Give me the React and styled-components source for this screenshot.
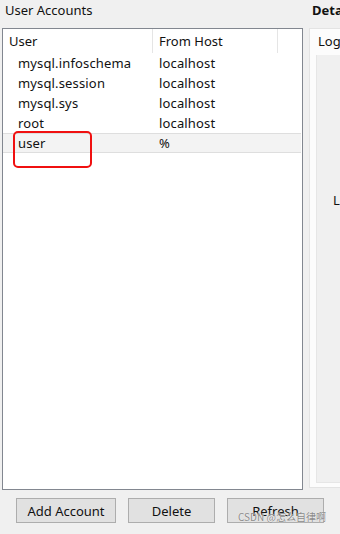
import styled, { createGlobalStyle } from 'styled-components';

const GlobalStyle = createGlobalStyle`
    body {
        margin: 0;
        background: #f0f0f0;
        font-family: "Noto Sans", "Liberation Sans", sans-serif;
        overflow: hidden;
    }
`;

const accounts = [
    { user: 'mysql.infoschema', host: 'localhost' },
    { user: 'mysql.session', host: 'localhost' },
    { user: 'mysql.sys', host: 'localhost' },
    { user: 'root', host: 'localhost' },
    { user: 'user', host: '%', selected: true },
];

function App() {
    return (
        <>
            <GlobalStyle />
            <Window>
                <Section>
                    <SectionTitle>User Accounts</SectionTitle>
                    <ListBox>
                        <HeaderRow>
                            <HeaderCell $width={150}>User</HeaderCell>
                            <HeaderCell $width={125}>From Host</HeaderCell>
                        </HeaderRow>
                        {accounts.map((a) => (
                            <Row key={a.user} $selected={a.selected}>
                                <UserCell>{a.user}</UserCell>
                                <HostCell>{a.host}</HostCell>
                            </Row>
                        ))}
                        <Highlight />
                    </ListBox>
                </Section>
                <Section>
                    <SectionTitle $bold>Details for account user@%</SectionTitle>
                    <DetailsPanel>
                        <TabLabel>Login</TabLabel>
                        <TabPage>
                            <FieldLabel>Limit to Hosts Matching:</FieldLabel>
                        </TabPage>
                    </DetailsPanel>
                </Section>
                <ButtonBar>
                    <Button $width={100}>Add Account</Button>
                    <Button $width={87}>Delete</Button>
                    <Button $width={97}>Refresh</Button>
                    <Watermark>CSDN @怎么自律啊</Watermark>
                </ButtonBar>
            </Window>
        </>
    );
}

export default App;

const Window = styled.div`
    width: 340px;
    height: 534px;
    overflow: hidden;
    display: grid;
    grid-template-columns: 301px 300px;
    grid-template-rows: 490px auto;
    column-gap: 6px;
    padding-left: 2px;
    box-sizing: border-box;
`;

const Section = styled.div`
    display: flex;
    flex-direction: column;
    min-width: 0;
`;

const SectionTitle = styled.div`
    height: 28px;
    padding-left: 3px;
    font-size: 13px;
    line-height: 20px;
    font-weight: ${(p) => (p.$bold ? 700 : 400)};
    color: #111;
    white-space: nowrap;
`;

const ListBox = styled.div`
    position: relative;
    flex: 1;
    background: #fff;
    border: 1px solid #828790;
`;

const HeaderRow = styled.div`
    display: flex;
    height: 24px;
`;

const HeaderCell = styled.div`
    width: ${(p) => p.$width}px;
    padding-left: 6px;
    box-sizing: border-box;
    border-right: 1px solid #e5e5e5;
    font-size: 13px;
    line-height: 24px;
    color: #111;
`;

const Row = styled.div`
    display: flex;
    height: 20px;
    box-sizing: border-box;
    margin-right: 1px;
    background: ${(p) => (p.$selected ? '#f3f3f3' : 'transparent')};
    border-top: 1px solid ${(p) => (p.$selected ? '#dedede' : 'transparent')};
    border-bottom: 1px solid ${(p) => (p.$selected ? '#dedede' : 'transparent')};
`;

const UserCell = styled.div`
    width: 150px;
    padding-left: 15px;
    box-sizing: border-box;
    font-size: 13px;
    line-height: 18px;
    letter-spacing: 0.15px;
    color: #111;
`;

const HostCell = styled(UserCell)`
    padding-left: 6px;
    width: auto;
`;

const Highlight = styled.div`
    position: absolute;
    left: 10px;
    top: 102px;
    width: 79px;
    height: 37px;
    box-sizing: border-box;
    border: 2.5px solid #f01010;
    border-radius: 5px;
`;

const DetailsPanel = styled.div`
    flex: 1;
    display: flex;
    flex-direction: column;
    background: #fcfcfc;
    border: 1px solid #e3e3e3;
    margin-bottom: 2px;
    padding: 0 0 4px 6px;
`;

const TabLabel = styled.div`
    height: 26px;
    padding-left: 2px;
    font-size: 13px;
    line-height: 24px;
    color: #111;
`;

const TabPage = styled.div`
    flex: 1;
    background: #f0f0f0;
    border-left: 1px solid #e6e6e6;
    border-bottom: 1px solid #e6e6e6;
    padding: 136px 0 0 16px;
`;

const FieldLabel = styled.div`
    font-size: 13px;
    color: #111;
    white-space: nowrap;
`;

const ButtonBar = styled.div`
    grid-column: 1 / 3;
    position: relative;
    display: flex;
    gap: 12px;
    padding: 8px 0 0 14px;
`;

const Button = styled.button`
    width: ${(p) => p.$width}px;
    height: 25px;
    padding: 0;
    background: #e1e1e1;
    border: 1px solid #adadad;
    font-family: "Noto Sans", "Liberation Sans", sans-serif;
    font-size: 13px;
    color: #111;
`;

const Watermark = styled.div`
    position: absolute;
    left: 236px;
    top: 21px;
    font-family: "Noto Sans CJK SC", sans-serif;
    font-size: 10px;
    line-height: 11px;
    color: #8a8a8a;
    text-shadow: 0 0 1px #fff;
    white-space: nowrap;
`;
